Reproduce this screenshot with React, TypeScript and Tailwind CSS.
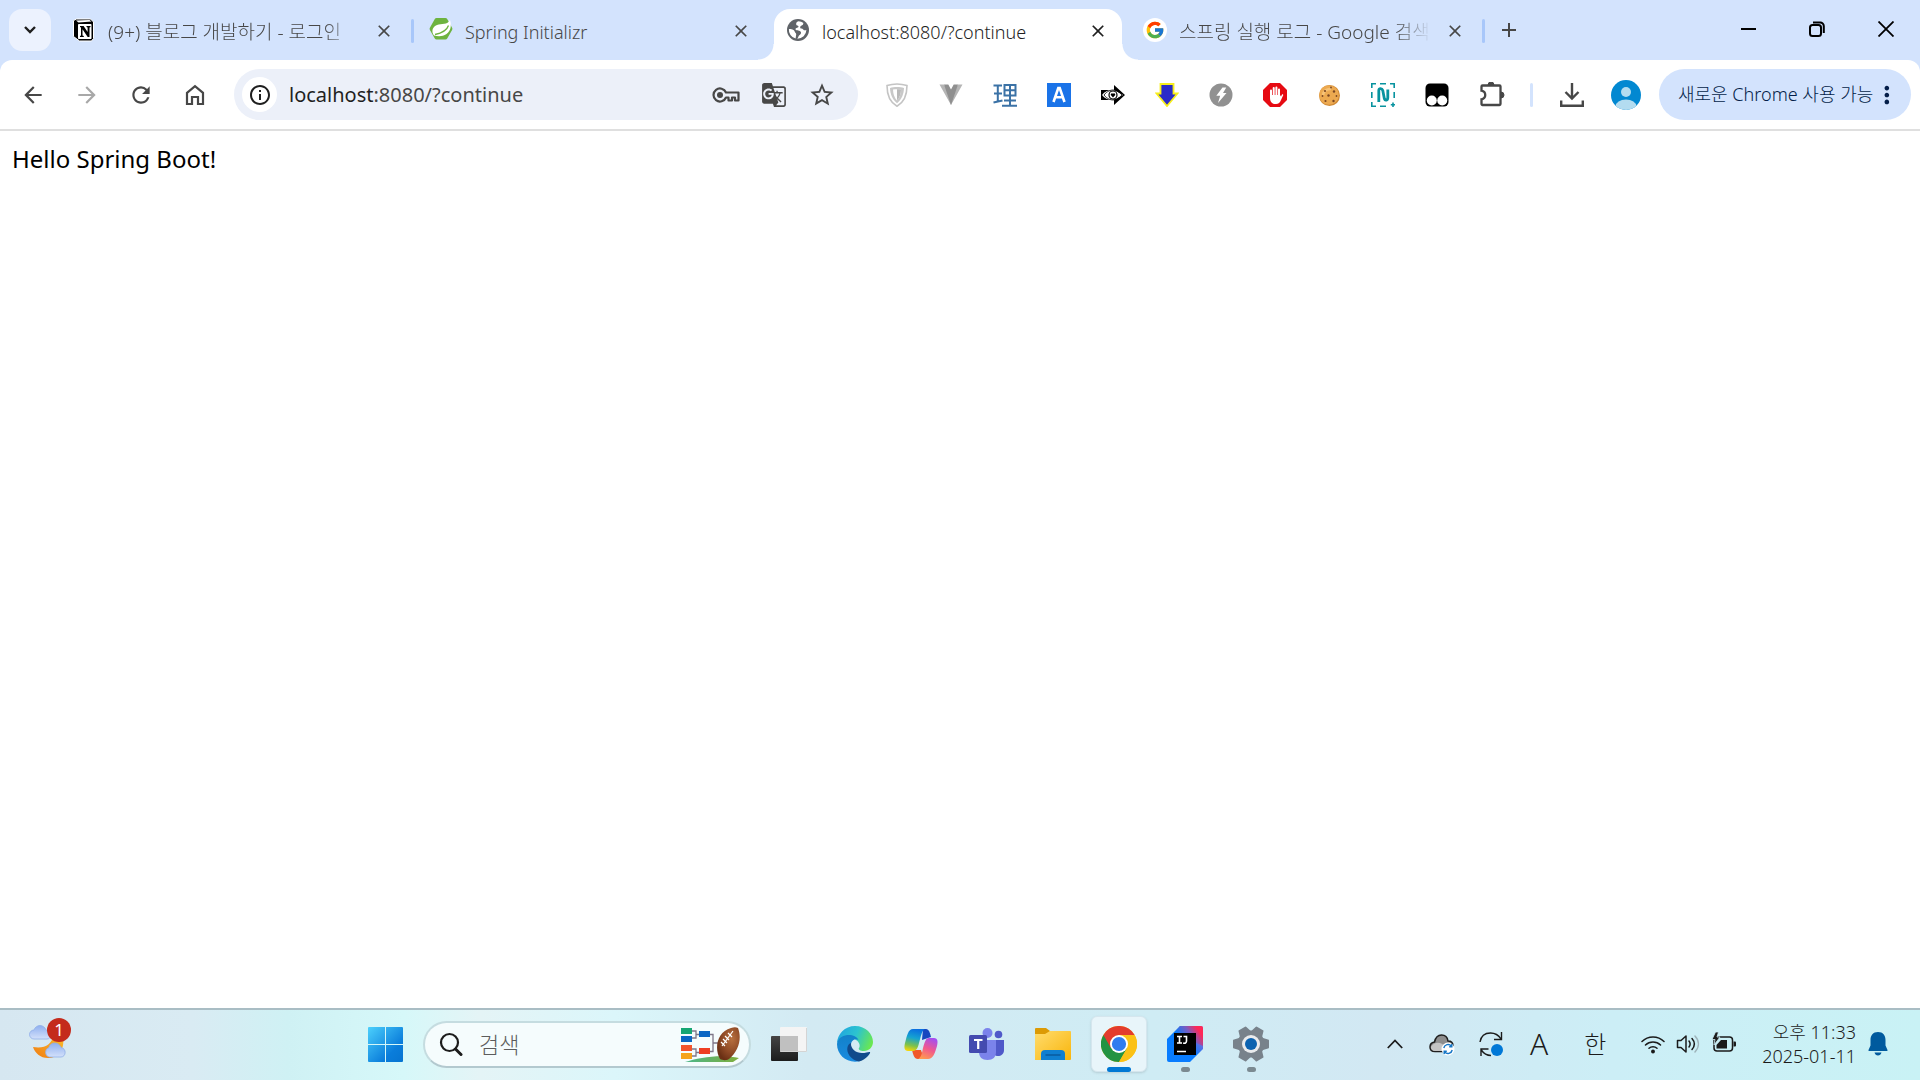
import type { ReactNode } from "react";
import { FcGoogle } from "react-icons/fc";
import {
  MdArrowBack,
  MdArrowForward,
  MdClose,
  MdAdd,
  MdGTranslate,
  MdInfoOutline,
  MdMoreVert,
  MdRefresh,
  MdStarOutline,
} from "react-icons/md";

/* ---------- tab icons ---------- */

const NotionIcon = () => (
  <svg viewBox="0 0 24 24" className="size-6">
    <path d="M1.500 2.600 4.500 1h14l3 3v16.500L19.500 23H7.500L1.500 18.500z" fill="#000" stroke="#fff" strokeWidth="1" />
    <path d="M4 2.600 17.500 2l2 1.500L6.500 4.500z" fill="#fff" />
    <rect x="6" y="6" width="13.500" height="15" rx=".8" fill="#fff" />
    <path d="M8 8h3.600l4 6V9.500L14.500 9V8h4v1l-1 .5V19h-1.800l-5.200-7.800V17.500l1.300.5v1H8v-1l1-.5V9.500L8 9z" fill="#000" />
  </svg>
);

const SpringIcon = () => (
  <svg viewBox="0 0 24 24" className="size-6">
    <path d="M7.500 1h9a2 2 0 0 1 1.700 1l4.900 8.800a2.200 2.200 0 0 1 0 2.200l-4.900 8.400a2 2 0 0 1-1.700 1h-9a2 2 0 0 1-1.700-1L.9 13a2.200 2.200 0 0 1 0-2.200L5.800 2a2 2 0 0 1 1.700-1z" transform="translate(0 -1)" fill="#6db33f" />
    <path d="M21 2c1.800 5.500.8 11-3.500 14-4 2.800-8.500 2.500-12.500 1.500-3-4-1.500-9 3-10.500C12.500 5.500 18.500 7 21 2z" fill="#fff" />
    <path d="M19.500 7.500C17.700 13 13 15 6 16.500" fill="none" stroke="#6db33f" strokeWidth="1.300" />
  </svg>
);

const GlobeIcon = () => (
  <svg viewBox="0 0 24 24" className="size-6">
    <circle cx="12" cy="12" r="11" fill="#5f6368" />
    <path d="M12.500 3.200c-2 .3-2.500 1.800-2.300 3.300.2 1.300 2 .8 2.300 2 .3 1.500-3 1-3 2.800 0 1.500 3.500.6 5 2.200 1.300 1.400.2 3-1.200 3.800-1.200.7-.8 2.500-2 3.400A9 9 0 0 0 20.400 12c-1.200.6-2.500.4-3.200-.6-.8-1.200-2.600-.3-3-1.600-.4-1.500 1.300-2.200 2.300-2.700.8-.4.400-1.500 1-2.200a9 9 0 0 0-5-1.700z" fill="#fff" />
    <path d="M2.900 11c2.300 0 5.300.6 5.800 2.500.4 1.500 1.700 1.600 1.500 3.200-.1 1-.5 2.500-.6 3.900A9 9 0 0 1 2.900 11z" fill="#fff" />
  </svg>
);

const GoogleIcon = () => (
  <span className="flex size-6 items-center justify-center rounded-full bg-white">
    <FcGoogle className="size-5" />
  </span>
);

/* ---------- toolbar icons ---------- */

const HomeIcon = () => (
  <svg viewBox="0 0 24 24" className="size-6" fill="none" stroke="#474747" strokeWidth="2.200">
    <path d="M4 9.800 12 3.200l8 6.600V21h-5v-7H9v7H4z" />
  </svg>
);

const KeyIcon = () => (
  <svg viewBox="0 0 28 16" className="h-4 w-7" fill="none" stroke="#474747" strokeWidth="2.200">
    <circle cx="8" cy="8" r="3" fill="#474747" stroke="none" />
    <path d="M14 5.500h12.500v8h-3.500v-3h-3v3h-3.500v-3H14a6.500 6.500 0 1 1 0-5z" strokeLinejoin="round" />
  </svg>
);

const ShieldIcon = () => (
  <svg viewBox="0 0 24 24" className="size-6">
    <path d="M12 1c3.500 0 7 .6 10 1.600C22 12 19 19.500 12 23.300 5 19.500 2 12 2 2.600 5 1.600 8.500 1 12 1z" fill="#fff" stroke="#c4c4c4" strokeWidth="1.600" />
    <path d="M12 4c2.500 0 5 .4 7 1-.3 6.500-2.500 11.800-7 15.200C7.500 16.800 5.300 11.500 5 5c2-.6 4.500-1 7-1z" fill="#c8c8c8" />
    <path d="M8 6.600c2.500-.6 5.500-.6 8 0-.2 4.500-1.200 8-4 11-2.800-3-3.800-6.500-4-11z" fill="#fff" />
    <path d="M12 6.200c1.400 0 2.700.1 4 .4-.2 4.500-1.200 8-4 11z" fill="#b9b9b9" />
  </svg>
);

const VueIcon = () => (
  <svg viewBox="0 0 24 24" className="size-6">
    <path d="M.5 1.500H5L12 14l7-12.500h4.500L12 22z" fill="#b5b5b5" />
    <path d="M5 1.500h4.300L12 6.500l2.700-5H19L12 22z" fill="#8f8f8f" />
  </svg>
);

const HanjaIcon = () => (
  <svg viewBox="0 0 24 24" className="size-6" fill="none" stroke="#3b72a6" strokeWidth="2">
    <path d="M.5 2.500H9M1 10.500h8M.5 19.500l9-2M4.800 2.500v16M11.500 2v10.500h11V2zM11.500 7.200h11M17 2v20.500M11 17.500h12M9 22.800h15" />
  </svg>
);

const LetterAIcon = () => (
  <svg viewBox="0 0 24 24" className="size-6">
    <rect width="24" height="24" fill="#1a73e8" />
    <path d="M6.500 19 11.300 5h1.400l4.800 14M8.300 14.300h7.400" fill="none" stroke="#fff" strokeWidth="2.600" />
  </svg>
);

const EyeArrowIcon = () => (
  <svg viewBox="0 0 24 24" className="size-6">
    <path d="M0 7h13V2l11 10-11 10v-5H0z" fill="#000" />
    <path d="M1 12c4-5.500 11-6 15-3.500l6 3.500-6 3.500C12 18 5 17.500 1 12z" fill="#fff" />
    <path d="M3 12c3-4 7-5 9-5s6 1.500 9 5c-3 3.500-7 5-9 5s-6-1-9-5z" fill="none" stroke="#000" strokeWidth=".8" />
    <circle cx="12" cy="12" r="4" fill="#fff" stroke="#000" strokeWidth="1.200" />
    <path d="M12 14.500 9.800 12a1.300 1.300 0 0 1 2.200-1.300A1.300 1.300 0 0 1 14.200 12z" fill="#000" />
  </svg>
);

const DownArrowIcon = () => (
  <svg viewBox="0 0 24 24" className="size-6">
    <path d="M5.500 1h13v9.500h4L12 23 1.500 10.500h4z" fill="#2a2ac8" stroke="#f7ee1c" strokeWidth="1.800" />
  </svg>
);

const BoltIcon = () => (
  <svg viewBox="0 0 24 24" className="size-6">
    <circle cx="12" cy="12" r="11.500" fill="#919191" />
    <path d="M13.500 4.500h3.800L14 10h3.500L9 20l2.200-7.200H7.300z" fill="#fff" />
  </svg>
);

const BlockIcon = () => (
  <svg viewBox="0 0 24 24" className="size-6">
    <path d="M7 0h10l7 7v10l-7 7H7l-7-7V7z" fill="#e60a12" />
    <path d="M8 7.500v6M10.700 5v8M13.400 4.500V13M16 6.500v7" stroke="#fff" strokeWidth="2" strokeLinecap="round" />
    <path d="M7 12h10l1 1.500 1-2c.6-.6 1.400-.1 1.200.8L18 17c-1 2.500-2.500 4-5 4h-1c-3 0-5-2.500-5-6z" fill="#fff" />
  </svg>
);

const CookieIcon = () => (
  <svg viewBox="0 0 24 24" className="size-6">
    <circle cx="12.500" cy="12.500" r="10.500" fill="#d08a35" />
    <circle cx="12" cy="12" r="9.800" fill="#eca950" />
    <path d="M6 12a7 7 0 0 1 8-6" stroke="#f7c377" strokeWidth="2.500" fill="none" />
    <g fill="#7a4722">
      <circle cx="8" cy="8" r="1.100" />
      <circle cx="14" cy="4.500" r=".9" />
      <circle cx="17" cy="8.500" r="1.200" />
      <circle cx="11.500" cy="12.500" r="1.200" />
      <circle cx="5.500" cy="13" r=".9" />
      <circle cx="16.500" cy="18" r="1.200" />
      <circle cx="8.500" cy="18" r="1.100" />
      <circle cx="19.500" cy="13" r=".9" />
    </g>
  </svg>
);

const CaptureIcon = () => (
  <svg viewBox="0 0 24 24" className="size-6" fill="none" stroke="#08939f">
    <path d="M.8 5V.8H5M9 .8h6M19 .8h4.200V5M.8 9v6M23.200 9v6M.8 19v4.200H5M9 23.200h6M22 19.500v4.500M19.800 21.800h4.500" strokeWidth="1.600" />
    <path d="M7.800 19V7.500c0-2.800 3.200-2.200 4 0l1.500 8c.8 2.500 3.500 2 3.500-1V6.500" strokeWidth="2.800" />
  </svg>
);

const TamperIcon = () => (
  <svg viewBox="0 0 24 24" className="size-6">
    <rect x=".5" y=".5" width="23" height="23" rx="4.500" fill="#000" />
    <circle cx="6.800" cy="17.500" r="5" fill="#fff" />
    <circle cx="17.200" cy="17.500" r="5" fill="#fff" />
  </svg>
);

const PuzzleIcon = () => (
  <svg viewBox="0 0 26 26" className="ml-[2px] size-[26px]">
    <path d="M3.500 3.500h17a1 1 0 0 1 1 1V22a1 1 0 0 1-1 1h-17a1 1 0 0 1-1-1v-4.700c5-1 5-7.600 0-8.600V4.500a1 1 0 0 1 1-1z" fill="none" stroke="#474747" strokeWidth="2.300" />
    <path d="M9 3a3 3 0 0 1 6 0zM22 10a3 3 0 0 1 0 6z" fill="#474747" stroke="#474747" />
  </svg>
);

const DownloadIcon = () => (
  <svg viewBox="0 0 24 24" className="size-6" fill="none" stroke="#474747" strokeWidth="2.400">
    <path d="M12 0v15M5.500 9l6.500 6.500L18.500 9M1.200 17.500v5.300h21.600v-5.300" />
  </svg>
);

const AvatarIcon = () => (
  <svg viewBox="0 0 30 30" className="size-[30px]">
    <clipPath id="avatar">
      <circle cx="15" cy="15" r="15" />
    </clipPath>
    <g clipPath="url(#avatar)">
      <rect width="30" height="30" fill="#0288d1" />
      <circle cx="15" cy="12" r="5" fill="#b3dcf0" />
      <ellipse cx="15" cy="26.500" rx="10.500" ry="7" fill="#b3dcf0" />
    </g>
  </svg>
);

/* ---------- taskbar icons ---------- */

const WeatherIcon = () => (
  <svg viewBox="0 6 42 42" className="size-[42px]">
    <defs>
      <linearGradient id="cloud" x1="0" y1="0" x2="0" y2="1">
        <stop offset="0" stopColor="#8fb0f0" />
        <stop offset="1" stopColor="#d3e0fa" />
      </linearGradient>
      <linearGradient id="moon" x1="0" y1="1" x2="1" y2="0">
        <stop offset="0" stopColor="#f07c13" />
        <stop offset="1" stopColor="#fbc02d" />
      </linearGradient>
    </defs>
    <path d="M4 30c11 2 19-2 21-13l9 3c2 13-5 21-15 21-8 0-13-5-15-11z" fill="url(#moon)" />
    <path d="M5 22a4.500 4.500 0 0 1 0-9c2-6 10-6 12 0 6 1 6 9 1 9z" fill="url(#cloud)" stroke="#90aee8" strokeWidth=".8" />
    <path d="M20 40a5 5 0 0 1 0-9.500c1-6 10-6 12 0 6 1 5 9.500 0 9.500z" fill="url(#cloud)" stroke="#90aee8" strokeWidth=".8" />
  </svg>
);

const WindowsIcon = () => (
  <svg viewBox="0 0 35 35" className="size-[35px]">
    <defs>
      <linearGradient id="win" x1="0" y1="0" x2="1" y2="1">
        <stop offset="0" stopColor="#4cd0fc" />
        <stop offset=".7" stopColor="#0a7ddb" />
        <stop offset="1" stopColor="#0674d0" />
      </linearGradient>
    </defs>
    <path d="M1 0h16v17H0V1a1 1 0 0 1 1-1zm17 0h16a1 1 0 0 1 1 1v16H18zM0 18h17v17H1a1 1 0 0 1-1-1zm18 0h17v16a1 1 0 0 1-1 1H18z" fill="url(#win)" />
  </svg>
);

const SearchIcon = () => (
  <svg viewBox="0 0 24 24" className="size-6 shrink-0" fill="none" stroke="#1c1c1c">
    <circle cx="10.500" cy="10.500" r="8.500" strokeWidth="2.200" />
    <path d="m16.500 17 5.500 5.500" strokeWidth="3" strokeLinecap="round" />
  </svg>
);

const FootballArt = () => (
  <svg viewBox="0 0 60 37" className="h-[37px] w-[60px] shrink-0">
    <defs>
      <linearGradient id="grass" x1="0" y1="0" x2="1" y2="0">
        <stop offset="0" stopColor="#4db68a" />
        <stop offset="1" stopColor="#7fae3c" />
      </linearGradient>
      <radialGradient id="ball" cx=".65" cy=".35" r=".7">
        <stop offset="0" stopColor="#b8703f" />
        <stop offset=".6" stopColor="#8f4a26" />
        <stop offset="1" stopColor="#6b3015" />
      </radialGradient>
    </defs>
    <path d="M4 36c14-5 38-8 54-4l-6 4z" fill="url(#grass)" />
    <path d="M11 5h4v7h-4m4-3.500h4M11 23h4v7h-4m4-3.500h4M29 8.500h3v17h-3m3-8.500h5" fill="none" stroke="#7d7688" strokeWidth="1.300" />
    <rect y="2" width="11" height="6" fill="#17a673" />
    <rect y="10" width="11" height="6" fill="#0b66c3" />
    <rect y="19" width="11" height="6" fill="#f2542d" />
    <rect y="27" width="11" height="6" fill="#f5a31a" />
    <rect x="18" y="5" width="11" height="6" fill="#0b66c3" />
    <rect x="18" y="22" width="11" height="6" fill="#ef3e23" />
    <path d="M57 2c4 10 1 23-9 31-3 2-7 1-9 0-6-11-3-27 11-31 3-1 5-1 7 0z" fill="url(#ball)" />
    <path d="m41 20 11-15m-12 11 4 4m-2-7 4 4m-2-7 4 4m-1-7 4 4" stroke="#fff" strokeWidth="1.200" />
  </svg>
);

const TaskViewIcon = () => (
  <svg viewBox="0 0 36 36" className="size-9">
    <defs>
      <linearGradient id="tv" x1="0" y1="0" x2="0" y2="1">
        <stop offset="0" stopColor="#444" />
        <stop offset="1" stopColor="#1c1c1c" />
      </linearGradient>
    </defs>
    <rect y="10" width="27" height="25" rx="1" fill="url(#tv)" />
    <rect x="9" y="1" width="27" height="25" rx="1" fill="#f4f4f4" />
    <path d="M9 10h18v16H9z" fill="#c0c0c0" />
    <path d="M35.500 2v23.500H10" stroke="#d4d4d4" fill="none" />
  </svg>
);

const EdgeIcon = () => (
  <svg viewBox="0 0 36 36" className="size-9">
    <defs>
      <linearGradient id="edgeTop" x1="0" y1=".3" x2="1" y2=".6">
        <stop offset="0" stopColor="#1fa5e0" />
        <stop offset=".5" stopColor="#2cc3cf" />
        <stop offset="1" stopColor="#6be84f" />
      </linearGradient>
      <linearGradient id="edgeLeft" x1="0" y1="0" x2="0" y2="1">
        <stop offset="0" stopColor="#1281c9" />
        <stop offset="1" stopColor="#1b8be0" />
      </linearGradient>
    </defs>
    <path d="M0 18C0 8 8 0 18 0c11 0 18 8 18 16 0 5-4 9-9 9-4 0-6-1.500-5-3 1.500-2 .5-6-3-8C14 11 2 10 0 18z" fill="url(#edgeTop)" />
    <path d="M0 18C1 11 7 9 12 9c4 0 8 1.800 9.500 5-4-2-7.500 1-7.500 5-5 8 3 15 9 16-12 3-23-5-23-17z" fill="url(#edgeLeft)" />
    <path d="M14 17c-.5 6 5 10 11 10 4 0 6.500-1.500 8-1 1 1-4 8-11 9.500C14 34 9 27 10.500 21c.7-2.500 2-3.500 3.500-4z" fill="#114a8b" />
  </svg>
);

const CopilotIcon = () => (
  <svg viewBox="0 0 36 36" className="size-9">
    <defs>
      <linearGradient id="coA" x1=".5" y1="0" x2=".3" y2="1">
        <stop offset="0" stopColor="#0a6fe0" />
        <stop offset=".4" stopColor="#16a4d0" />
        <stop offset=".75" stopColor="#7fc24a" />
        <stop offset="1" stopColor="#f5d60a" />
      </linearGradient>
      <linearGradient id="coB" x1=".7" y1="0" x2=".3" y2="1">
        <stop offset="0" stopColor="#a44ef0" />
        <stop offset=".5" stopColor="#f0588f" />
        <stop offset="1" stopColor="#ff9a50" />
      </linearGradient>
    </defs>
    <path d="M20 3h3c3 0 4 4 5 8l-9 3z" fill="#1746c0" />
    <path d="M9 24h9l3 9h-6c-4 0-5-5-6-9z" fill="#f0572a" />
    <path d="M10 3h12c-3 1-4 7-6 14-1 5-3 8-6 8H5c-4 0-4-4-3-8 2-7 3-14 8-14z" fill="url(#coA)" />
    <path d="M26 12h5c4 0 4 4 3 8-2 7-4 13-9 13H15c3-1 4-6 5-11 2-7 3-10 6-10z" fill="url(#coB)" />
  </svg>
);

const TeamsIcon = () => (
  <svg viewBox="0 0 36 36" className="size-9">
    <circle cx="29.500" cy="8.500" r="3.800" fill="#5059c9" />
    <circle cx="18.500" cy="7" r="5" fill="#7b83eb" />
    <path d="M24 14h11v10c0 4-3 6-6 6s-5-2-5-6z" fill="#5059c9" />
    <path d="M10 14h17v12c0 5-3 8-8.500 8S10 31 10 26z" fill="#7b83eb" />
    <rect y="9" width="18" height="18" rx="1.500" fill="#444bb0" />
    <path d="M5 14h8.500M9.200 14v9" stroke="#fff" strokeWidth="2.200" />
  </svg>
);

const FolderIcon = () => (
  <svg viewBox="0 0 36 36" className="size-9">
    <defs>
      <linearGradient id="folder" x1="0" y1="0" x2="1" y2="1">
        <stop offset="0" stopColor="#ffdc6e" />
        <stop offset="1" stopColor="#f9b50b" />
      </linearGradient>
    </defs>
    <path d="M0 3a1 1 0 0 1 1-1h10l4 3-2 5H0z" fill="#dc9a05" />
    <path d="M0 8h10l5-3h20a1 1 0 0 1 1 1v27a1 1 0 0 1-1 1H0z" fill="url(#folder)" />
    <path d="M6 34V28a4 4 0 0 1 4-4h16a4 4 0 0 1 4 4v6z" fill="#0f7fd0" />
    <path d="M10.500 29h15" stroke="#0a5a9e" strokeWidth="1.500" />
  </svg>
);

const ChromeIcon = () => (
  <svg viewBox="0 0 36 36" className="size-9">
    <circle cx="18" cy="18" r="18" fill="#fbc116" />
    <path d="M18 18 2.400 9a18 18 0 0 0 15.600 27l8-13.500z" fill="#229342" />
    <path d="M18 9h15.600A18 18 0 0 0 2.400 9l7.800 13.500z" fill="#e33b2e" />
    <path d="M18 9h15.600A18 18 0 0 1 18 36l7.800-13.500z" fill="#fbc116" />
    <circle cx="18" cy="18" r="9" fill="#fff" />
    <circle cx="18" cy="18" r="7.100" fill="#2f7bf0" />
  </svg>
);

const IntelliJIcon = () => (
  <svg viewBox="0 0 36 36" className="size-9">
    <defs>
      <linearGradient id="ij" x1=".15" y1=".5" x2="1" y2=".1">
        <stop offset="0" stopColor="#087cfa" />
        <stop offset=".45" stopColor="#7a5bc0" />
        <stop offset=".8" stopColor="#fe2857" />
      </linearGradient>
      <linearGradient id="ijLow" x1="0" y1="1" x2="1" y2="0">
        <stop offset=".5" stopColor="#087cff" />
        <stop offset=".9" stopColor="#b064c8" />
      </linearGradient>
    </defs>
    <path d="M13 0h21a2 2 0 0 1 2 2v21L23 36H2a2 2 0 0 1-2-2V13z" fill="url(#ijLow)" />
    <path d="M13 0h21a2 2 0 0 1 2 2v18L7 7z" fill="url(#ij)" />
    <rect x="7" y="7" width="22" height="22" fill="#000" />
    <path d="M10 10.500h5M12.500 10.500v6.500M10 17h5M16.500 10.500h3V15c0 2-1.500 2.500-3.300 2M10 25.500h9" fill="none" stroke="#fff" strokeWidth="1.600" />
  </svg>
);

const SettingsIcon = () => (
  <svg viewBox="0 0 36 36" className="size-9">
    <g fill="#78828b">
      <circle cx="18" cy="18" r="13.500" />
      {[0, 60, 120].map((angle) => (
        <path key={angle} transform={`rotate(${angle} 18 18)`} d="M1 13.500 6 12h24l5 1.500a1 1 0 0 1 1 1v7a1 1 0 0 1-1 1L30 24H6l-5-1.500a1 1 0 0 1-1-1v-7a1 1 0 0 1 1-1z" />
      ))}
    </g>
    <circle cx="18" cy="18" r="9" fill="#e9ebed" />
    <circle cx="18" cy="18" r="6" fill="#0b62b0" />
  </svg>
);

const CloudSyncIcon = () => (
  <svg viewBox="0 0 26 24" className="h-6 w-[26px]">
    <path d="M6 19.500C2 19.500 1 17 1 15s1.500-4.500 4.500-5C6.500 5.500 9 3 12.500 3S18.500 5.500 19 9c3 0 5 2 5 5s-2 5.500-5 5.500z" fill="#8e8e8e" stroke="#1f1f1f" strokeWidth="1.500" />
    <path d="M1.800 15C5 10 12 9 16 15l3 4H6c-3 0-4-2-4.200-4z" fill="#c4c4c4" />
    <circle cx="19" cy="17" r="6.500" fill="#fff" />
    <path d="M14.800 16a4.300 4.300 0 0 1 7.500-2M23.200 18a4.300 4.300 0 0 1-7.500 2M22.800 12v2.700h-2.600M15.200 22v-2.700h2.600" fill="none" stroke="#1476c6" strokeWidth="1.400" />
  </svg>
);

const SyncIcon = () => (
  <svg viewBox="0 0 24 26" className="h-[26px] w-6" fill="none" stroke="#1b1b1b" strokeWidth="1.400">
    <path d="M1 11C2 5 6 2 11.500 2c4.500 0 8 2 10.500 6M22.500 1v7.500H15M2 25v-7h7.500M2.300 19c2 3 5 5.500 9.700 5.500" />
    <circle cx="18" cy="19" r="6" fill="#0078d7" stroke="none" />
  </svg>
);

const WifiIcon = () => (
  <svg viewBox="0 0 24 20" className="h-5 w-6" fill="none" stroke="#1b1b1b" strokeWidth="1.500" strokeLinecap="round">
    <path d="M1 7.500a15.500 15.500 0 0 1 22 0M4.500 11a10.600 10.600 0 0 1 15 0M8 14.300a5.700 5.700 0 0 1 8 0" />
    <circle cx="12" cy="17.500" r="1.200" fill="#1b1b1b" />
  </svg>
);

const SpeakerIcon = () => (
  <svg viewBox="0 0 24 24" className="size-6" fill="none" stroke="#1b1b1b" strokeWidth="1.500" strokeLinecap="round" strokeLinejoin="round">
    <path d="M1.500 8.500H5L10 4v16l-5-4.500H1.500zM13 9c1.500 2 1.500 4 0 6M16 6.500c3 3.500 3 7.500 0 11" />
    <path d="M19 4c4.500 5 4.500 11 0 16" stroke="#9fb4bb" />
  </svg>
);

const BatteryIcon = () => (
  <svg viewBox="0 0 26 24" className="h-6 w-[26px]">
    <rect x="3" y="5" width="18.500" height="14" rx="3" fill="none" stroke="#1b1b1b" strokeWidth="1.500" />
    <path d="M22.500 9.500h1.500a1 1 0 0 1 1 1V13.500a1 1 0 0 1-1 1h-1.500z" fill="#1b1b1b" />
    <path d="M5.500 16.500V13L10 8h6v8.500z" fill="#1b1b1b" />
    <path d="M4.500 0 1 7.500h3L3 13l6-8H6L7.500 0z" fill="#1b1b1b" stroke="#cdeef5" strokeWidth=".8" />
  </svg>
);

const BellIcon = () => (
  <svg viewBox="0 0 20 24" className="h-6 w-5" fill="#005a9e">
    <path d="M10 0c5 0 7.500 3.500 7.500 8v5.500L19.500 18c.2.700-.2 1-.7 1H1.200c-.5 0-.9-.3-.7-1l2-4.500V8C2.500 3.500 5 0 10 0zM6.500 20.500h7c-.5 2-1.800 3-3.500 3s-3-1-3.500-3z" />
  </svg>
);

/* ---------- building blocks ---------- */

type TabProps = { icon: ReactNode; title: string; active?: boolean; divider?: boolean; large?: boolean };

const Tab = ({ icon, title, active, divider, large }: TabProps) => (
  <div
    className={
      active
        ? "relative flex h-[51px] min-w-0 flex-1 rounded-t-2xl bg-white px-3 pt-[7px] text-[#1f1f1f]"
        : "relative flex h-[51px] min-w-0 flex-1 px-3 pt-[7px] text-[#474747]"
    }
  >
    {active && (
      <>
        <span className="absolute bottom-0 -left-4 size-4 bg-[radial-gradient(circle_at_0_0,#d3e3fd_15px,#fff_16px)]" />
        <span className="absolute -right-4 bottom-0 size-4 bg-[radial-gradient(circle_at_100%_0,#d3e3fd_15px,#fff_16px)]" />
      </>
    )}
    <button type="button" className="flex h-7 min-w-0 flex-1 items-center gap-3 text-left">
      <span className="flex size-6 shrink-0 items-center">{icon}</span>
      <span
        className={
          large
            ? "min-w-0 flex-1 pt-1 text-[19px] leading-7 font-light whitespace-nowrap [mask-image:linear-gradient(to_right,#000_86%,transparent)]"
            : "min-w-0 flex-1 pt-1 text-[18px] leading-7 font-light whitespace-nowrap"
        }
      >
        {title}
      </span>
    </button>
    <button type="button" aria-label="탭 닫기" className="ml-3 flex h-7 w-6 shrink-0 items-center justify-center pt-[2px]">
      <MdClose className="size-5" />
    </button>
    {divider && <span className="absolute top-[10px] -right-[6px] h-6 w-[3px] rounded-full bg-[#a8c7fa]" />}
  </div>
);

const ToolButton = ({ label, children }: { label: string; children: ReactNode }) => (
  <button type="button" aria-label={label} className="flex h-12 w-[54px] shrink-0 items-center justify-center text-[#474747]">
    {children}
  </button>
);

const extensions: [string, ReactNode][] = [
  ["Shield", <ShieldIcon />],
  ["Vue", <VueIcon />],
  ["한자", <HanjaIcon />],
  ["A", <LetterAIcon />],
  ["Eye", <EyeArrowIcon />],
  ["Download helper", <DownArrowIcon />],
  ["Bolt", <BoltIcon />],
  ["AdBlock", <BlockIcon />],
  ["Cookie", <CookieIcon />],
  ["Capture", <CaptureIcon />],
  ["Tampermonkey", <TamperIcon />],
  ["확장 프로그램", <PuzzleIcon />],
];

const apps: { name: string; icon: ReactNode; state?: "active" | "open" }[] = [
  { name: "작업 보기", icon: <TaskViewIcon /> },
  { name: "Edge", icon: <EdgeIcon /> },
  { name: "Copilot", icon: <CopilotIcon /> },
  { name: "Teams", icon: <TeamsIcon /> },
  { name: "파일 탐색기", icon: <FolderIcon /> },
  { name: "Chrome", icon: <ChromeIcon />, state: "active" },
  { name: "IntelliJ IDEA", icon: <IntelliJIcon />, state: "open" },
  { name: "설정", icon: <SettingsIcon />, state: "open" },
];

const AppButton = ({ name, icon, state }: (typeof apps)[number]) => (
  <button
    type="button"
    aria-label={name}
    className={
      state === "active"
        ? "relative flex size-14 shrink-0 items-center justify-center rounded-md border border-[#d5e6ee] bg-[#e8f5fa] shadow-sm"
        : "relative flex size-14 shrink-0 items-center justify-center"
    }
  >
    {icon}
    {state === "active" && <span className="absolute -bottom-px h-[5px] w-6 rounded-full bg-[#0078d4]" />}
    {state === "open" && <span className="absolute bottom-0 h-[5px] w-[9px] rounded-full bg-[#7b8a91]" />}
  </button>
);

export default function App() {
  return (
    <div className="flex h-screen flex-col overflow-hidden bg-white font-['Noto_Sans','Noto_Sans_CJK_KR',sans-serif]">
      <header>
        <div className="flex h-[60px] items-start bg-[#d3e3fd] pt-[9px] pl-[9px]">
          <button type="button" aria-label="탭 검색" className="mr-[9px] flex size-[42px] shrink-0 items-center justify-center rounded-[13px] bg-[#ecf2fe]">
            <svg viewBox="0 0 12 8" className="h-2 w-3" fill="none" stroke="#1f1f1f" strokeWidth="2.400">
              <path d="m1 1 5 5 5-5" />
            </svg>
          </button>
          <nav className="flex max-w-[1419px] min-w-0 flex-1 gap-[9px]">
            <Tab icon={<NotionIcon />} title="(9+) 블로그 개발하기 - 로그인" divider large />
            <Tab icon={<SpringIcon />} title="Spring Initializr" />
            <Tab icon={<GlobeIcon />} title="localhost:8080/?continue" active />
            <Tab icon={<GoogleIcon />} title="스프링 실행 로그 - Google 검색" divider large />
          </nav>
          <button type="button" aria-label="새 탭" className="ml-[9px] flex size-[42px] shrink-0 items-center justify-center text-[#474747]">
            <MdAdd className="size-6" />
          </button>
          <div className="ml-auto flex">
            <button type="button" aria-label="최소화" className="flex h-10 w-[69px] items-center justify-center">
              <span className="h-[2px] w-[15px] bg-black" />
            </button>
            <button type="button" aria-label="이전 크기로 복원" className="flex h-10 w-[68px] items-center justify-center">
              <svg viewBox="0 0 16 16" className="size-4" fill="none" stroke="#000" strokeWidth="2">
                <rect x="1" y="4" width="11" height="11" rx="2.500" />
                <path d="M4 1.500h7A3.500 3.500 0 0 1 14.800 5v7" />
              </svg>
            </button>
            <button type="button" aria-label="닫기" className="flex h-10 w-[69px] items-center justify-center">
              <svg viewBox="0 0 16 16" className="size-4" stroke="#000" strokeWidth="1.800">
                <path d="m.5.5 15 15m0-15-15 15" />
              </svg>
            </button>
          </div>
        </div>

        <div className="bg-[#d3e3fd]">
          <div className="flex h-[71px] items-center rounded-t-xl border-b-2 border-[#dfdfdf] bg-white pr-[9px] pl-[6px]">
            <ToolButton label="뒤로"><MdArrowBack className="size-[26px]" /></ToolButton>
            <ToolButton label="앞으로"><MdArrowForward className="size-[26px] text-[#a8a8a8]" /></ToolButton>
            <ToolButton label="새로고침"><MdRefresh className="size-[26px]" /></ToolButton>
            <ToolButton label="홈"><HomeIcon /></ToolButton>
            <div className="mx-3 flex h-[51px] min-w-0 flex-1 items-center rounded-full bg-[#ecf0f9] pr-3 pl-2">
              <button type="button" aria-label="사이트 정보" className="flex size-[35px] shrink-0 items-center justify-center rounded-full bg-white text-[#1f1f1f]">
                <MdInfoOutline className="size-6" />
              </button>
              <div className="relative ml-3 flex h-full min-w-0 flex-1 items-center text-[20px]">
                <span aria-hidden="true" className="whitespace-nowrap text-[#474747]">
                  <span className="text-[#1f1f1f]">localhost</span>:8080/?continue
                </span>
                <input
                  aria-label="주소창"
                  defaultValue="localhost:8080/?continue"
                  className="absolute inset-0 w-full bg-transparent text-transparent caret-black outline-none"
                />
              </div>
              <button type="button" aria-label="비밀번호" className="flex w-12 justify-center"><KeyIcon /></button>
              <button type="button" aria-label="번역" className="flex w-12 justify-center text-[#474747]"><MdGTranslate className="size-[26px]" /></button>
              <button type="button" aria-label="북마크" className="flex w-12 justify-center text-[#474747]"><MdStarOutline className="size-7" /></button>
            </div>
            {extensions.map(([label, icon]) => (
              <ToolButton key={label} label={label}>{icon}</ToolButton>
            ))}
            <span className="mx-3 h-6 w-[3px] shrink-0 rounded-full bg-[#d3e3fd]" />
            <ToolButton label="다운로드"><DownloadIcon /></ToolButton>
            <ToolButton label="프로필"><AvatarIcon /></ToolButton>
            <button type="button" className="ml-[6px] flex h-[51px] w-[252px] shrink-0 items-center justify-between rounded-full bg-[#d3e3fd] pr-[10px] pl-[19px] text-[18px] font-light whitespace-nowrap text-[#041e49]">
              새로운 Chrome 사용 가능
              <MdMoreVert className="size-7" />
            </button>
          </div>
        </div>
      </header>

      <main className="flex-1 px-3 py-3">
        <p className="text-[24px] leading-8 text-black">Hello Spring Boot!</p>
      </main>

      <footer className="flex h-[72px] items-center border-t-2 border-[#a9bdc4] bg-[linear-gradient(to_right,#d6e7f1_0%,#d9ebf3_10%,#cff1f4_15%,#d6f8f9_21%,#e4f4f6_25%,#dbf6fa_32%,#d3eaf3_42%,#cfecf4_60%,#d2e8f3_72%,#cceef6_84%,#c9f2f5_100%)] pr-8 pb-[2px] pl-[29px]">
        <button type="button" aria-label="날씨" className="relative size-[42px] shrink-0">
          <WeatherIcon />
          <span className="absolute -top-[5px] left-[18px] flex size-6 items-center justify-center rounded-full bg-[#c42b1c] text-[17px] text-white">1</span>
        </button>
        <button type="button" aria-label="시작" className="ml-[286px] flex size-14 shrink-0 items-center justify-center"><WindowsIcon /></button>
        <label className="mx-[10px] flex h-[47px] w-[328px] shrink-0 items-center rounded-full border-2 border-[#c5dce0] border-b-[#b3c9cf] bg-[#f5fcfd] pr-2 pl-[14px]">
          <SearchIcon />
          <input aria-label="검색" placeholder="검색" className="ml-4 min-w-0 flex-1 bg-transparent text-[22px] font-light outline-none placeholder:text-[#5c5c5c]" />
          <FootballArt />
        </label>
        <div className="flex gap-[10px]">
          {apps.map((app) => (
            <AppButton key={app.name} {...app} />
          ))}
        </div>
        <div className="ml-auto flex shrink-0 items-center text-[#1b1b1b]">
          <button type="button" aria-label="숨겨진 아이콘 표시" className="flex w-11 justify-center">
            <svg viewBox="0 0 16 10" className="h-[10px] w-4" fill="none" stroke="#1b1b1b" strokeWidth="1.800">
              <path d="m.8 9 7.200-7.500L15.200 9" />
            </svg>
          </button>
          <button type="button" aria-label="OneDrive" className="flex w-[50px] justify-center"><CloudSyncIcon /></button>
          <button type="button" aria-label="업데이트" className="flex w-12 justify-center"><SyncIcon /></button>
          <button type="button" className="w-12 text-center text-[30px] leading-9 font-light">A</button>
          <button type="button" className="w-16 text-center text-[24px] leading-9 font-light">한</button>
          <button type="button" aria-label="빠른 설정" className="flex items-center gap-[11px] px-[14px]">
            <WifiIcon />
            <SpeakerIcon />
            <BatteryIcon />
          </button>
          <button type="button" className="ml-[11px] text-right text-[18px] leading-6 font-light">
            <span className="block">오후 11:33</span>
            <span className="block">2025-01-11</span>
          </button>
          <button type="button" aria-label="알림" className="ml-3"><BellIcon /></button>
        </div>
      </footer>
    </div>
  );
}
